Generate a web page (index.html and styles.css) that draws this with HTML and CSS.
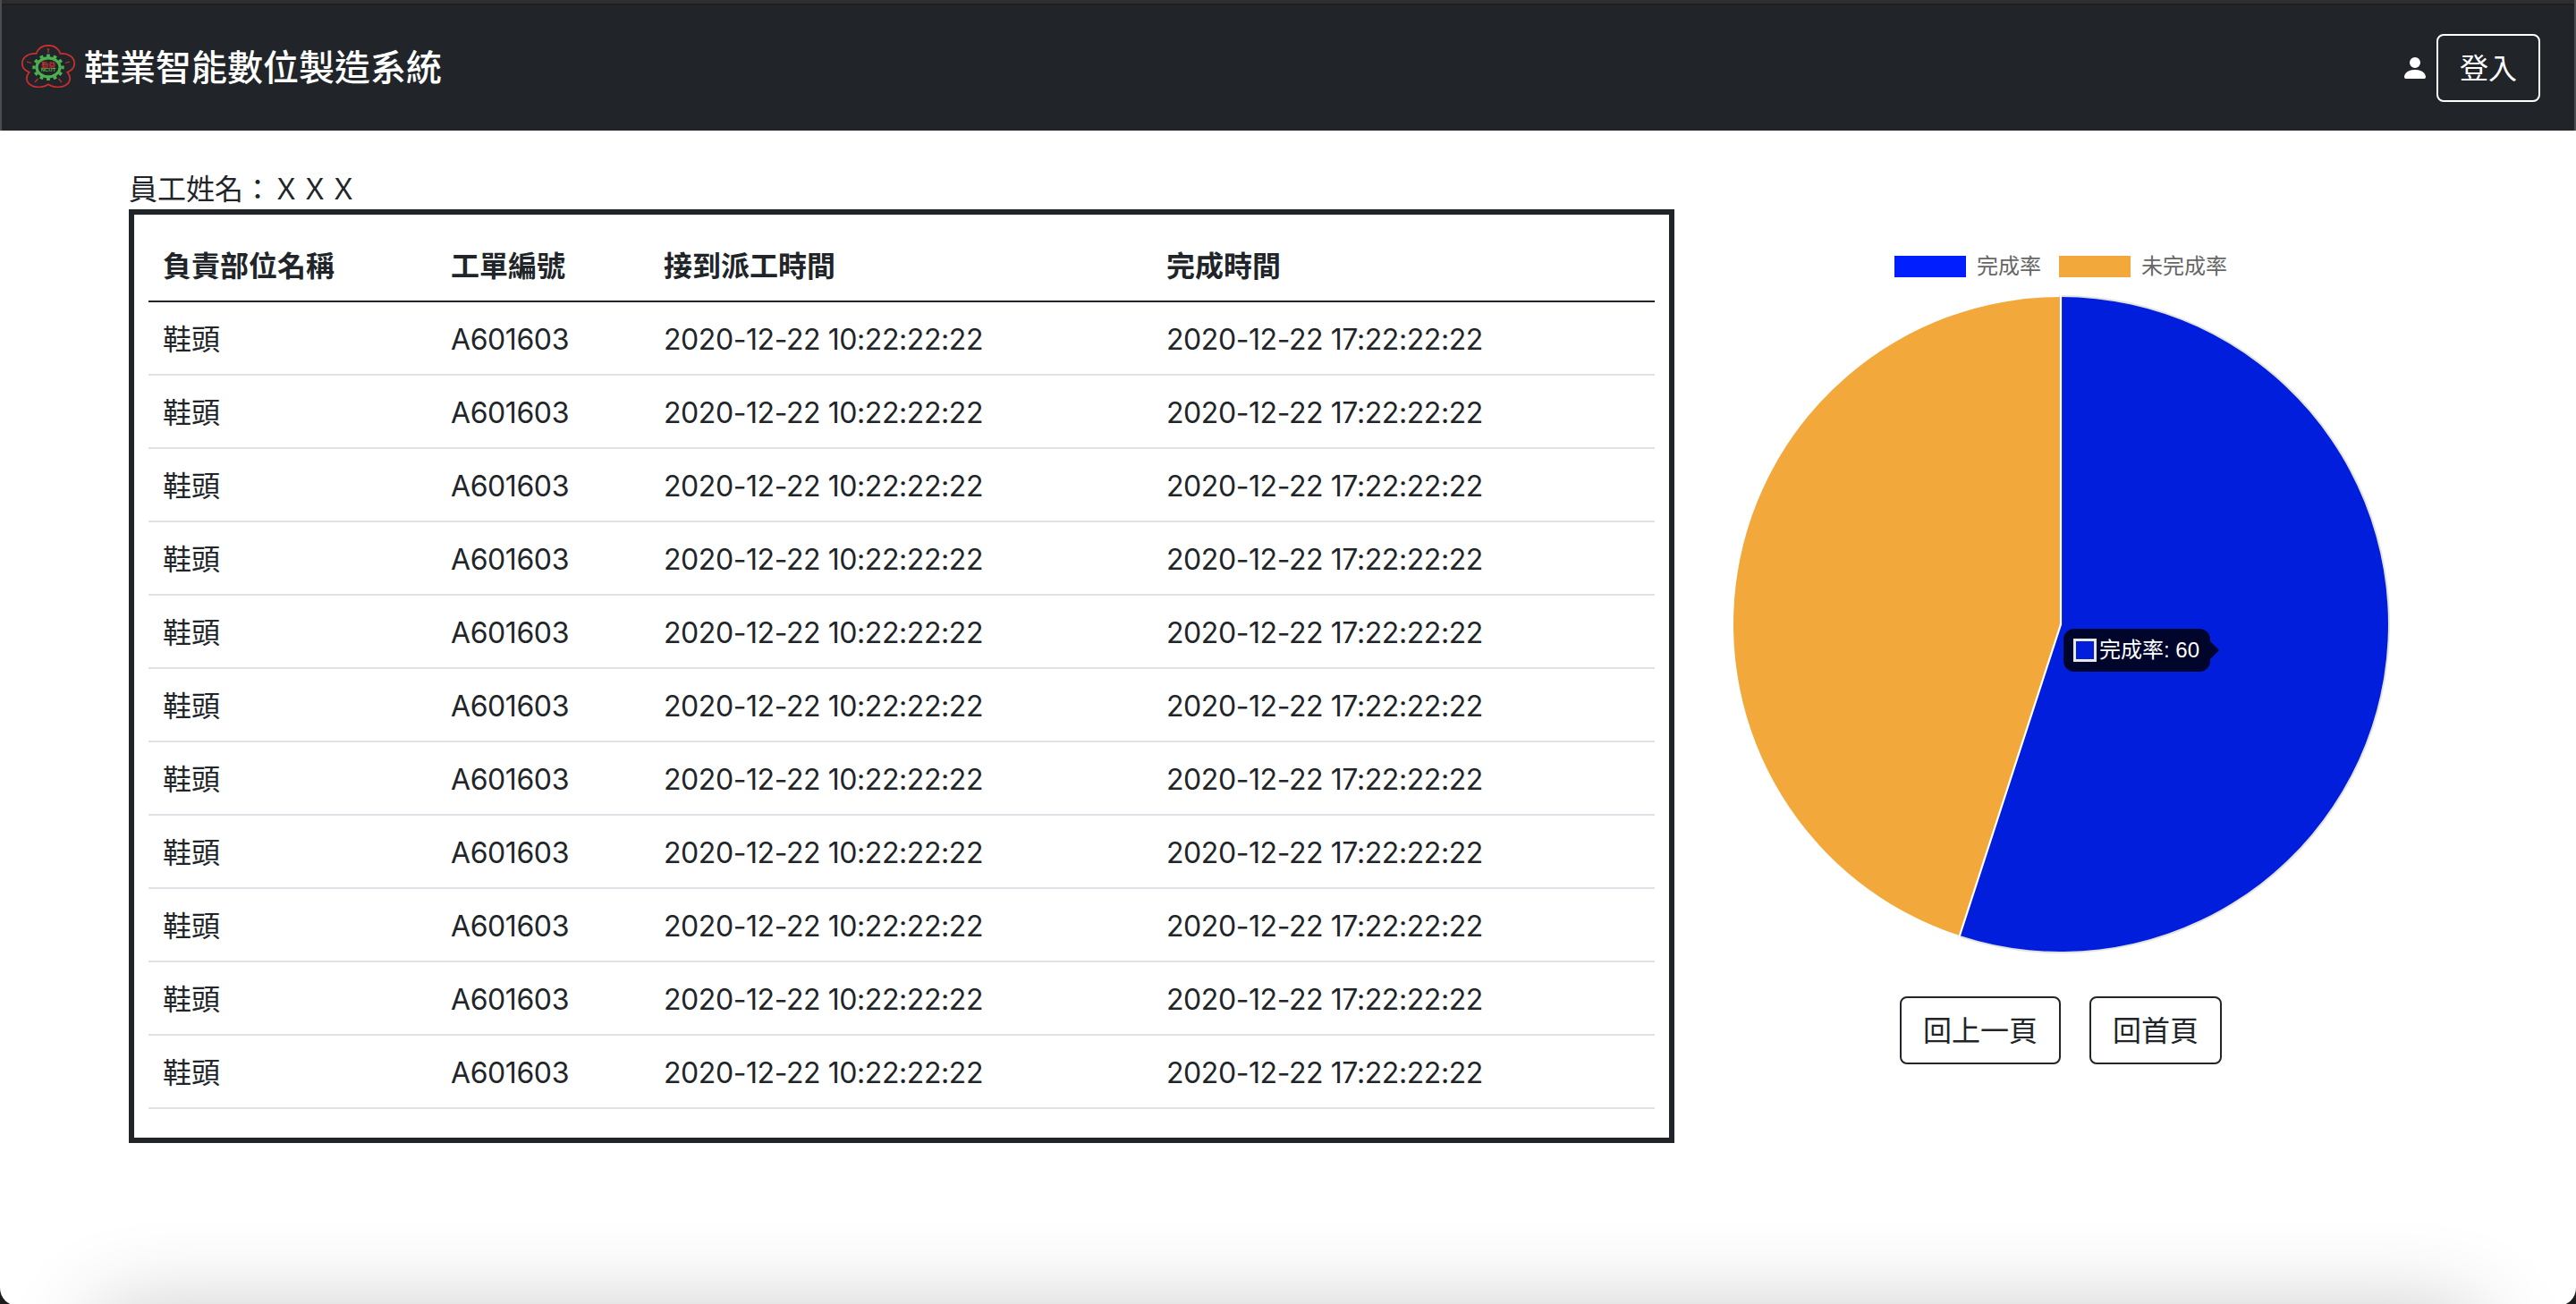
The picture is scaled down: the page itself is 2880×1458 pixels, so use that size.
FILE: index.html
```html
<!DOCTYPE html>
<html lang="zh-Hant">
<head>
<meta charset="utf-8">
<title>鞋業智能數位製造系統</title>
<link rel="stylesheet" href="styles.css">
</head>
<body>
<div class="window">
  <header class="navbar">
    <a class="brand">
      <svg class="logo" viewBox="0 0 60 48">
        <path d="M16.5 10C19 3 24 .8 30 .8S41 3 43.5 10C52 9 59.2 14 59.2 21C59.2 26 56 29 51.3 30.7C56 36 55 43 48 46C42 48.5 35 47.2 30 44.5C25 47.2 18 48.5 12 46C5 43 4 36 8.7 30.7C4 29 .8 26 .8 21C.8 14 8 9 16.5 10Z" fill="none" stroke="#cf2f2f" stroke-width="1.7"/>
        <ellipse cx="30" cy="25.3" rx="13" ry="10.5" fill="none" stroke="#4caf50" stroke-width="3.2"/>
        <ellipse cx="30" cy="25.3" rx="16" ry="13" fill="none" stroke="#4caf50" stroke-width="3.4" pathLength="24" stroke-dasharray="1 1" stroke-dashoffset=".5"/>
        <path d="M30 5v4M6 19l5 1.500M54 19l-5 1.500M15 42l3.500-4M45 42l-3.500-4M28.800 5h2.400" stroke="#c22f2f" stroke-width="1.300" fill="none"/>
        <text x="30" y="25.600" class="logo-cn">勤益</text>
        <text x="30" y="30.300" class="logo-en">NCUT</text>
      </svg>
      <span>鞋業智能數位製造系統</span>
    </a>
    <div class="account">
      <svg class="person" viewBox="0 0 16 16"><path fill="#fff" d="M3 14s-1 0-1-1 1-4 6-4 6 3 6 4-1 1-1 1H3zm5-6a3 3 0 1 0 0-6 3 3 0 0 0 0 6z"/></svg>
      <button class="btn btn-light">登入</button>
    </div>
  </header>
  <main class="content">
    <section class="work">
      <div class="employee">員工姓名：ＸＸＸ</div>
      <div class="panel">
        <table class="orders">
          <colgroup><col class="c-part"><col class="c-order"><col class="c-start"><col class="c-end"></colgroup>
          <thead><tr><th>負責部位名稱</th><th>工單編號</th><th>接到派工時間</th><th>完成時間</th></tr></thead>
          <tbody>
            <tr><td>鞋頭</td><td class="num">A601603</td><td class="num">2020-12-22 10:22:22:22</td><td class="num">2020-12-22 17:22:22:22</td></tr>
            <tr><td>鞋頭</td><td class="num">A601603</td><td class="num">2020-12-22 10:22:22:22</td><td class="num">2020-12-22 17:22:22:22</td></tr>
            <tr><td>鞋頭</td><td class="num">A601603</td><td class="num">2020-12-22 10:22:22:22</td><td class="num">2020-12-22 17:22:22:22</td></tr>
            <tr><td>鞋頭</td><td class="num">A601603</td><td class="num">2020-12-22 10:22:22:22</td><td class="num">2020-12-22 17:22:22:22</td></tr>
            <tr><td>鞋頭</td><td class="num">A601603</td><td class="num">2020-12-22 10:22:22:22</td><td class="num">2020-12-22 17:22:22:22</td></tr>
            <tr><td>鞋頭</td><td class="num">A601603</td><td class="num">2020-12-22 10:22:22:22</td><td class="num">2020-12-22 17:22:22:22</td></tr>
            <tr><td>鞋頭</td><td class="num">A601603</td><td class="num">2020-12-22 10:22:22:22</td><td class="num">2020-12-22 17:22:22:22</td></tr>
            <tr><td>鞋頭</td><td class="num">A601603</td><td class="num">2020-12-22 10:22:22:22</td><td class="num">2020-12-22 17:22:22:22</td></tr>
            <tr><td>鞋頭</td><td class="num">A601603</td><td class="num">2020-12-22 10:22:22:22</td><td class="num">2020-12-22 17:22:22:22</td></tr>
            <tr><td>鞋頭</td><td class="num">A601603</td><td class="num">2020-12-22 10:22:22:22</td><td class="num">2020-12-22 17:22:22:22</td></tr>
            <tr><td>鞋頭</td><td class="num">A601603</td><td class="num">2020-12-22 10:22:22:22</td><td class="num">2020-12-22 17:22:22:22</td></tr>
          </tbody>
        </table>
      </div>
    </section>
    <aside class="summary">
      <div class="legend">
        <span class="key"><i class="swatch done"></i>完成率</span>
        <span class="key"><i class="swatch todo"></i>未完成率</span>
      </div>
      <div class="chart">
        <svg class="pie" viewBox="-368 -368 736 736">
          <path d="M0 0V-366A366 366 0 1 1 -113.100 348.090Z" fill="#001edc" stroke="#e3e3e3" stroke-width="4"/>
          <path d="M0 0V-366A366 366 0 1 1 -113.100 348.090Z" fill="#001edc"/>
          <path d="M0 0L-113.100 348.090A366 366 0 0 1 0 -366Z" fill="#f2a83b"/>
          <path d="M0 -368V0L-113.700 350" fill="none" stroke="#fff" stroke-width="2.200"/>
        </svg>
        <div class="tooltip"><i class="tip-swatch"></i>完成率: 60</div>
      </div>
      <div class="actions">
        <button class="btn">回上一頁</button>
        <button class="btn">回首頁</button>
      </div>
    </aside>
  </main>
</div>
</body>
</html>
```
FILE: styles.css
```css
* { box-sizing: border-box; }

body {
  margin: 0;
  height: 1458px;
  overflow: hidden;
  background: #1c1c1c;
  color: #212529;
  font: 32px/48px Inter, "Noto Sans CJK TC", sans-serif;
}

.window {
  position: relative;
  height: 1460px;
  overflow: hidden;
  background: #fff;
  border-radius: 0 0 20px 20px;
}

/* soft shade rising from the bottom edge */
.window::after {
  content: "";
  position: absolute;
  left: 110px;
  right: 110px;
  top: 1468px;
  height: 100px;
  box-shadow: 0 0 100px rgba(0, 0, 0, .24);
}

.navbar {
  display: flex;
  align-items: center;
  justify-content: space-between;
  height: 146px;
  padding: 6px 38px 0 22px;
  background: linear-gradient(#2e2e2e 4px, #1e1e1f 4px, #1e1e1f 6px, #212529 6px);
  border: solid #4a4d50;
  border-width: 0 2px;
}

.brand {
  display: flex;
  align-items: center;
  gap: 10px;
  color: #fff;
  font-size: 40px;
  font-weight: 500;
  line-height: 60px;
}

.logo {
  width: 60px;
  height: 48px;
  margin-top: -4px;
}

.logo-cn {
  fill: #c22f2f;
  font: 700 8px "Noto Sans CJK TC", sans-serif;
  text-anchor: middle;
}

.logo-en {
  fill: #4caf50;
  font: 700 6px "Liberation Sans", sans-serif;
  text-anchor: middle;
}

.account {
  display: flex;
  align-items: center;
  gap: 8px;
}

.person { width: 32px; height: 32px; }

.btn {
  height: 76px;
  padding: 2px 24px 0;
  border: 2px solid #212529;
  border-radius: 8px;
  background: transparent;
  color: #212529;
  font: inherit;
}

.btn-light { border-color: #fff; color: #fff; }

.content {
  display: flex;
  align-items: flex-start;
  gap: 64px;
  padding: 40px 0 0 144px;
}

.work { width: 1728px; }

.employee { height: 48px; padding-top: 2px; }

.panel {
  padding: 16px 16px 32px;
  border: 6px solid #212529;
}

.orders {
  width: 1684px;
  table-layout: fixed;
  border-collapse: separate;
  border-spacing: 0;
}

.c-part { width: 322px; }
.c-order { width: 238px; }
.c-start { width: 562px; }

.orders th, .orders td {
  height: 82px;
  padding: 18px 16px 14px;
  border-bottom: 2px solid #dee2e6;
  text-align: left;
}

.orders th { border-bottom-color: #212529; }
.orders .num { letter-spacing: -.42px; }

.summary {
  display: flex;
  flex-direction: column;
  align-items: center;
  width: 736px;
  padding-top: 94px;
}

.legend {
  display: flex;
  gap: 20px;
  color: #666;
  font: 24px/36px "Liberation Sans", "Noto Sans CJK TC", sans-serif;
}

.key { display: flex; align-items: center; gap: 12px; }
.swatch { width: 80px; height: 24px; }
.done { background: #001eff; }
.todo { background: #f2a83b; }

.chart {
  position: relative;
  width: 736px;
  height: 736px;
  margin-top: 14px;
}

.pie { display: block; width: 736px; height: 736px; }

.tooltip {
  position: absolute;
  left: 371px;
  top: 373px;
  display: flex;
  align-items: center;
  gap: 3px;
  width: 164px;
  height: 48px;
  padding-left: 11px;
  border-radius: 12px;
  background: #00052c;
  color: #fff;
  font: 24px/48px "Liberation Sans", "Noto Sans CJK TC", sans-serif;
  white-space: nowrap;
}

.tooltip::after {
  content: "";
  position: absolute;
  left: 164px;
  top: 14px;
  border: solid transparent;
  border-width: 10px 0 10px 10px;
  border-left-color: #00052c;
}

.tip-swatch {
  width: 26px;
  height: 26px;
  border: 3px solid #e8e8e8;
  background: #001edc;
}

.actions {
  display: flex;
  gap: 32px;
  margin-top: 48px;
}
```
